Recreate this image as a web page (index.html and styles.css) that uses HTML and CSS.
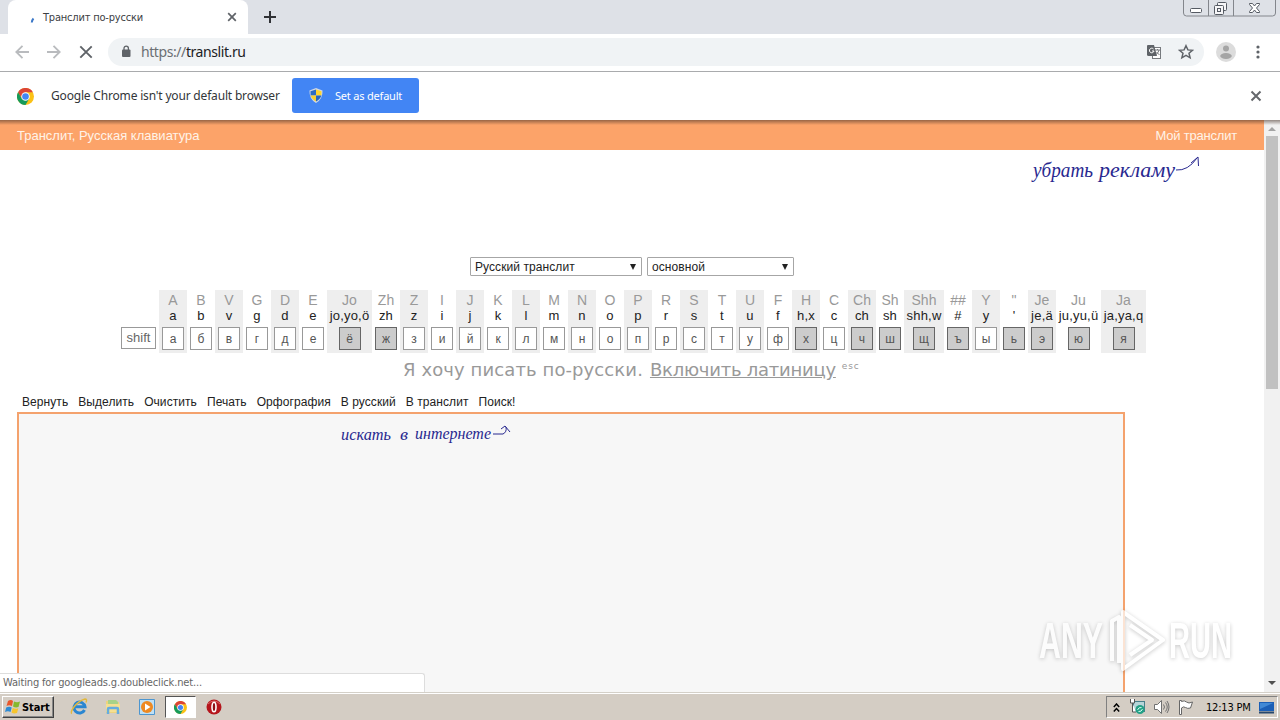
FILE: index.html
```html
<!DOCTYPE html>
<html lang="ru">
  <head>
    <meta charset="UTF-8" />
    <title>Транслит по-русски</title>
    <link rel="stylesheet" href="styles.css">
  </head>
  <body>
    <div class="tabstrip">
      <div class="tab">
        <svg class="spinner" width="16" height="16" viewBox="0 0 16 16"><path d="M8.500 6.500Q7 8 6.800 10.500" stroke="#3c78c8" stroke-width="2" fill="none"/></svg>
        <span class="tab-title">Транслит по-русски</span>
        <svg class="tab-close" width="10" height="10" viewBox="0 0 10 10"><path d="M1.200 1.200l7.600 7.600M8.800 1.200L1.200 8.800" stroke="#5f6368" stroke-width="1.700"/></svg>
      </div>
      <svg class="new-tab" width="12" height="12" viewBox="0 0 12 12"><path d="M6 0v12M0 6h12" stroke="#303236" stroke-width="2"/></svg>
      <div class="window-buttons">
        <svg width="94" height="17" viewBox="0 0 94 17" fill="none">
          <path d="M.5 0v13q0 3 3 3h86q3 0 3-3V0M25.500 0v16M50.500 0v16" stroke="#83868c"/>
          <rect x="7.500" y="8.500" width="11" height="4" rx="1" fill="#fff" stroke="#555a63"/>
          <g fill="#f6f6f8" stroke="#555a63"><rect x="34.500" y="2.500" width="9" height="8" rx="1"/><rect x="31.500" y="5.500" width="9" height="9" rx="1"/><rect x="34.500" y="8.500" width="3" height="3"/></g>
          <path d="M66.500 3.500h3l2 2.500 2-2.500h3v1l-3 3.500 3 3.500v1h-3l-2-2.500-2 2.500h-3v-1l3-3.500-3-3.500z" fill="#fff" stroke="#555a63"/>
        </svg>
      </div>
    </div>

    <div class="toolbar">
      <svg width="14" height="14" viewBox="0 0 14 14" fill="none" stroke="#b9bbbe" stroke-width="1.800"><path d="M14 7H1.500M7.500 .8L1.300 7l6.200 6.200"/></svg>
      <svg width="14" height="14" viewBox="0 0 14 14" fill="none" stroke="#b9bbbe" stroke-width="1.800"><path d="M0 7h12.500M6.500 .8L12.700 7l-6.200 6.200"/></svg>
      <svg width="14" height="14" viewBox="0 0 14 14" stroke="#5f6368" stroke-width="1.900"><path d="M1.300 1.300l11.400 11.400M12.700 1.300L1.300 12.700"/></svg>
      <div class="omnibox">
        <svg class="lock" width="10" height="13" viewBox="0 0 10 13"><rect x="1" y="4.500" width="8.500" height="7.500" rx="1" fill="#5f6368"/><path d="M3 5V3.300a2.200 2.200 0 0 1 4.400 0V5" fill="none" stroke="#5f6368" stroke-width="1.300"/></svg>
        <span class="url"><span class="scheme">https://</span>translit.ru</span>
        <svg class="translate" width="16" height="16" viewBox="0 0 16 16"><rect x="6.500" y="3.500" width="8" height="11" fill="#fff" stroke="#777a7e"/><path d="M1.500 1h6.500l3 11H2.500q-1.500 0-1.500-1.500V1.500z" fill="#5f6368"/><path d="M7.500 5A2.300 2.300 0 1 0 8 7H6" fill="none" stroke="#fff"/><path d="M9 6h5M11.500 5v1M13 6q-.5 3-3 4.500M10.500 8l3 3" fill="none" stroke="#777a7e"/></svg>
        <svg width="16" height="16" viewBox="0 0 16 16"><path d="M8 1.700l1.900 4.200 4.600.4-3.500 3 1.100 4.500L8 11.400l-4.100 2.400L5 9.300l-3.500-3 4.600-.4z" fill="none" stroke="#5f6368" stroke-width="1.500"/></svg>
      </div>
      <svg class="avatar" width="20" height="20" viewBox="0 0 20 20"><circle cx="10" cy="10" r="10" fill="#dcdcdc"/><circle cx="10" cy="6.500" r="3" fill="#a5a5a5"/><ellipse cx="10" cy="14" rx="5.800" ry="2.900" fill="#a5a5a5"/></svg>
      <svg class="menu" width="4" height="14" viewBox="0 0 4 14" fill="#5f6368"><circle cx="2" cy="2" r="1.600"/><circle cx="2" cy="7" r="1.600"/><circle cx="2" cy="12" r="1.600"/></svg>
    </div>

    <div class="infobar">
      <svg class="chrome-logo" width="17" height="17" viewBox="0 0 20 20"><circle cx="10" cy="10" r="10" fill="#fbc116"/><path d="M1.300 5A10 10 0 0 1 18.700 5H10L5.700 12.500z" fill="#dc4437"/><path d="M1.300 5A10 10 0 0 0 10 20l4.300-7.500H5.700z" fill="#169b5b"/><circle cx="10" cy="10" r="5" fill="#fff"/><circle cx="10" cy="10" r="3.900" fill="#4285f4"/></svg>
      <span class="infobar-text">Google Chrome isn't your default browser</span>
      <button class="set-default">
        <svg width="14" height="15" viewBox="0 0 14 15"><path d="M7 0l6.500 2.500Q14 11 7 15 0 11 .5 2.500z" fill="#cfd8e6"/><path d="M7 1.500v6H1.600L1.500 3.300z" fill="#2d6cc4"/><path d="M7 1.500l5.500 1.800-.1 4.200H7z" fill="#ffd52e"/><path d="M1.700 7.500H7v6Q2.500 11 1.700 7.500z" fill="#f8d030"/><path d="M12.300 7.500H7v6q4.500-2.500 5.300-6z" fill="#2866bd"/></svg>
        <span>Set as default</span>
      </button>
      <svg class="infobar-close" width="12" height="12" viewBox="0 0 12 12"><path d="M1.500 1.500l9 9M10.500 1.500l-9 9" stroke="#65686c" stroke-width="2"/></svg>
    </div>

    <div class="viewport">
      <div class="page">
        <div class="site-header">
          <span>Транслит, Русская клавиатура</span>
          <span class="my">Мой транслит</span>
        </div>

        <svg class="note note-ads" width="180" height="40" viewBox="0 0 180 40">
          <g class="ink"><text x="8" y="27" font-size="20" textLength="60" lengthAdjust="spacingAndGlyphs">убрать</text><text x="74" y="27" font-size="20" textLength="76" lengthAdjust="spacingAndGlyphs">рекламу</text></g>
          <path d="M151 20q12 1 21-12M166 13l7-6 .5 9" fill="none" stroke="#28288f"/>
        </svg>

        <div class="layouts">
          <div class="select select-lang"><span>Русский транслит</span><i></i></div>
          <div class="select select-kind"><span>основной</span><i></i></div>
        </div>

        <div class="keyboard">
          <div class="shift">shift</div>
          <div class="col"><u>A</u><b>a</b><kbd>а</kbd></div>
          <div class="col"><u>B</u><b>b</b><kbd>б</kbd></div>
          <div class="col"><u>V</u><b>v</b><kbd>в</kbd></div>
          <div class="col"><u>G</u><b>g</b><kbd>г</kbd></div>
          <div class="col"><u>D</u><b>d</b><kbd>д</kbd></div>
          <div class="col"><u>E</u><b>e</b><kbd>е</kbd></div>
          <div class="col wide"><u>Jo</u><b>jo,yo,ö</b><kbd class="dark">ё</kbd></div>
          <div class="col"><u>Zh</u><b>zh</b><kbd class="dark">ж</kbd></div>
          <div class="col"><u>Z</u><b>z</b><kbd>з</kbd></div>
          <div class="col"><u>I</u><b>i</b><kbd>и</kbd></div>
          <div class="col"><u>J</u><b>j</b><kbd>й</kbd></div>
          <div class="col"><u>K</u><b>k</b><kbd>к</kbd></div>
          <div class="col"><u>L</u><b>l</b><kbd>л</kbd></div>
          <div class="col"><u>M</u><b>m</b><kbd>м</kbd></div>
          <div class="col"><u>N</u><b>n</b><kbd>н</kbd></div>
          <div class="col"><u>O</u><b>o</b><kbd>о</kbd></div>
          <div class="col"><u>P</u><b>p</b><kbd>п</kbd></div>
          <div class="col"><u>R</u><b>r</b><kbd>р</kbd></div>
          <div class="col"><u>S</u><b>s</b><kbd>с</kbd></div>
          <div class="col"><u>T</u><b>t</b><kbd>т</kbd></div>
          <div class="col"><u>U</u><b>u</b><kbd>у</kbd></div>
          <div class="col"><u>F</u><b>f</b><kbd>ф</kbd></div>
          <div class="col"><u>H</u><b>h,x</b><kbd class="dark">х</kbd></div>
          <div class="col"><u>C</u><b>c</b><kbd>ц</kbd></div>
          <div class="col"><u>Ch</u><b>ch</b><kbd class="dark">ч</kbd></div>
          <div class="col"><u>Sh</u><b>sh</b><kbd class="dark">ш</kbd></div>
          <div class="col medium"><u>Shh</u><b>shh,w</b><kbd class="dark">щ</kbd></div>
          <div class="col"><u>##</u><b>#</b><kbd class="dark">ъ</kbd></div>
          <div class="col"><u>Y</u><b>y</b><kbd>ы</kbd></div>
          <div class="col"><u>"</u><b>'</b><kbd class="dark">ь</kbd></div>
          <div class="col"><u>Je</u><b>je,ä</b><kbd class="dark">э</kbd></div>
          <div class="col wide"><u>Ju</u><b>ju,yu,ü</b><kbd class="dark">ю</kbd></div>
          <div class="col wide"><u>Ja</u><b>ja,ya,q</b><kbd class="dark">я</kbd></div>
        </div>

        <div class="switch"><span>Я хочу писать по-русски.</span><a>Включить латиницу</a><small>esc</small></div>

        <div class="actions">
          <a>Вернуть</a>
          <a>Выделить</a>
          <a>Очистить</a>
          <a>Печать</a>
          <a>Орфография</a>
          <a>В русский</a>
          <a>В транслит</a>
          <a>Поиск!</a>
        </div>

        <div class="editor">
          <svg class="note note-search" width="185" height="28" viewBox="0 0 185 28">
            <g class="ink"><text x="6" y="20" font-size="16" textLength="50" lengthAdjust="spacingAndGlyphs">искать</text><text x="65" y="20" font-size="16" textLength="8" lengthAdjust="spacingAndGlyphs">в</text><text x="80" y="19" font-size="16" textLength="76" lengthAdjust="spacingAndGlyphs">интернете</text></g>
            <path d="M158 14h10q4-2 3-7M166 9l4-3 5 6" fill="none" stroke="#28288f"/>
          </svg>
        </div>
      </div>

      <div class="scrollbar">
        <svg width="16" height="16" viewBox="0 0 16 16"><path d="M4 11l4-4 4 4z" fill="#a3a3a3"/></svg>
        <div class="thumb"></div>
        <svg width="16" height="16" viewBox="0 0 16 16"><path d="M4 5h8l-4 4z" fill="#505050"/></svg>
      </div>

      <div class="status">Waiting for googleads.g.doubleclick.net...</div>

      <svg class="watermark" width="244" height="70" viewBox="0 0 244 70">
        <g class="mark-text"><text x="5" y="51" textLength="64" lengthAdjust="spacingAndGlyphs">ANY</text><text x="135" y="51" textLength="63" lengthAdjust="spacingAndGlyphs">RUN</text></g>
        <g fill="none" stroke="#fff" stroke-width="4" stroke-linejoin="round"><path d="M78 54V14l7-4v46M89 5l40 28-40 29V5z"/><path d="M96 18l22 15-22 15"/></g>
      </svg>
    </div>

    <div class="taskbar">
      <div class="start">
        <svg width="16" height="16" viewBox="0 0 16 16"><path d="M3 2q3-2 5 0L7 7Q4 5.500 1.500 7z" fill="#e9572b"/><path d="M9 2.500q3 1.500 6 0L13.500 8q-3 1-5.500-.5z" fill="#86b82e"/><path d="M1.200 8.500q3-1.500 5.500 0L5.500 13Q3 11.500 0 13z" fill="#2d8bd4"/><path d="M7.800 9q2.500 1.500 5.500.2L12 14q-3 1.200-5.500-.5z" fill="#f7c52c"/></svg>
        <span>Start</span>
      </div>
      <div class="launch">
        <svg width="18" height="18" viewBox="0 0 18 18" fill="none"><path d="M14.500 12A5.500 5.500 0 1 1 15 8.800H5" stroke="#2a86d1" stroke-width="3"/><path d="M2 15.500Q0 15 3.500 9.500 9 2.500 15 1q2.500 0 1 3.500" stroke="#e2b83c" stroke-width="1.400"/></svg>
      </div>
      <div class="launch">
        <svg width="18" height="18" viewBox="0 0 18 18"><path d="M2 3h5l1 1h7v11H2z" fill="#edd37d"/><path d="M4 2h8l2 2v3H4z" fill="#a8d288"/><path d="M2 6h14v8H2z" fill="#f5df91"/><path d="M4 16v-5q0-1 1-1h8q1 0 1 1v5" fill="none" stroke="#65ace0" stroke-width="2.500"/></svg>
      </div>
      <div class="launch">
        <svg width="18" height="18" viewBox="0 0 18 18"><path d="M1.500 1.500h15v15h-15z" fill="#bfe0f5" stroke="#4d96d0"/><circle cx="9" cy="9" r="6" fill="#ee8922"/><path d="M7 5.500v7l5.500-3.500z" fill="#fff"/></svg>
      </div>
      <div class="launch active">
        <svg width="13" height="13" viewBox="0 0 20 20"><circle cx="10" cy="10" r="10" fill="#fbc116"/><path d="M1.300 5A10 10 0 0 1 18.700 5H10L5.700 12.500z" fill="#dc4437"/><path d="M1.300 5A10 10 0 0 0 10 20l4.300-7.500H5.700z" fill="#169b5b"/><circle cx="10" cy="10" r="5" fill="#fff"/><circle cx="10" cy="10" r="3.900" fill="#4285f4"/></svg>
      </div>
      <div class="launch">
        <svg width="16" height="16" viewBox="0 0 16 16"><circle cx="8" cy="8" r="7.500" fill="#b5151c"/><path d="M2 5q6-6 12 0" fill="none" stroke="#da6666"/><ellipse cx="8" cy="8" rx="2" ry="4.800" fill="#8f1016" stroke="#fff" stroke-width="1.600"/></svg>
      </div>
      <div class="tray">
        <svg class="chevrons" width="7" height="9" viewBox="0 0 7 9" fill="none" stroke="#000" stroke-width="1.500"><path d="M.8 4l2.700-3 2.700 3M.8 8.500l2.700-3 2.700 3"/></svg>
        <svg class="network" width="17" height="16" viewBox="0 0 17 16"><rect x="4.500" y="2.500" width="11" height="10" fill="#b6d5d9" stroke="#477f8b"/><path d="M1.500 0v4h4V0M3.500 4v9H7" fill="#fff" stroke="#555"/><circle cx="11" cy="10.500" r="4.500" fill="#24a086"/><path d="M8.500 11q1-3 4-2.500M13.500 10q-1 3-4 2.500" fill="none" stroke="#d9fff4"/></svg>
        <svg class="sound" width="17" height="16" viewBox="0 0 17 16" fill="none" stroke="#707070"><path d="M1.500 5.500h3l4-4v13l-4-4h-3z" fill="#fff"/><path d="M10.500 5.500q2 2.500 0 5M12.500 3.500q3.500 4.500 0 9M14 2q4 6 0 12"/></svg>
        <svg class="flag" width="17" height="16" viewBox="0 0 17 16"><path d="M2.500 15.500v-14h2v1q3-1.500 5 .5t6 0l-2 6q-3 1-5-.5t-4 .5v6.500z" fill="#fff" stroke="#666"/></svg>
        <span class="clock">12:13 PM</span>
        <svg width="15" height="13" viewBox="0 0 15 13"><path d="M0 1h15v9H0z" fill="#1b5fb6"/><path d="M1 2h13L1 8z" fill="#4189d5"/><path d="M0 10.500h15v2H0z" fill="#26476d"/></svg>
      </div>
    </div>
  </body>
</html>
```

FILE: styles.css
```css
* {
  box-sizing: border-box;
}

body {
  margin: 0;
  width: 1280px;
  height: 720px;
  overflow: hidden;
  background: #fff;
  font-family: "Liberation Sans", sans-serif;
  white-space: nowrap;
}

svg {
  display: block;
  flex: none;
}

/* browser window */
.tabstrip {
  display: flex;
  height: 34px;
  padding-left: 8px;
  background: #dee1e7;
}

.tab {
  display: flex;
  align-items: center;
  width: 240px;
  padding: 0 11px 0 17px;
  border-radius: 8px 8px 0 0;
  background: #fff;
}

.spinner {
  margin-top: 5px;
}

.tab-title {
  margin-left: 2px;
  color: #3c4043;
  font: 11px "DejaVu Sans Condensed", "DejaVu Sans", sans-serif;
  letter-spacing: -0.2px;
}

.tab-close {
  margin-left: auto;
}

.new-tab {
  margin: 11px 0 0 16px;
}

.window-buttons {
  margin-left: auto;
  margin-right: 3px;
}

.toolbar {
  display: flex;
  align-items: center;
  gap: 18px;
  height: 38px;
  padding: 0 20px 2px 15px;
  border-bottom: 1px solid #a9abad;
}

.omnibox {
  display: flex;
  flex: none;
  align-items: center;
  width: 1096px;
  height: 28px;
  margin: 0 -6px 0 -3px;
  padding: 0 10px 0 13px;
  border-radius: 14px;
  background: #f0f3f5;
}

.lock {
  margin-right: 10px;
}

.url {
  color: #202124;
  font: 14px "Noto Sans", sans-serif;
  letter-spacing: -0.42px;
}

.scheme {
  color: #6b6f73;
}

.translate {
  margin: 0 16px 0 auto;
}

.menu {
  margin-left: auto;
}

.infobar {
  display: flex;
  align-items: center;
  height: 48px;
  padding: 0 18px 0 17px;
}

.infobar-text {
  width: 228px;
  margin: -2px 13px 0 17px;
  color: #333639;
  font: 12px "Noto Sans", sans-serif;
  letter-spacing: -0.18px;
}

.set-default {
  display: flex;
  align-items: center;
  gap: 12px;
  width: 127px;
  height: 35px;
  margin-top: -1px;
  padding: 0 17px;
  border: 0;
  border-radius: 3px;
  background: #4285f4;
  color: #fff;
  font: 11px "Noto Sans", sans-serif;
  white-space: nowrap;
  letter-spacing: -0.2px;
}

.infobar-close {
  margin-left: auto;
}

.viewport {
  position: relative;
  display: flex;
  height: 572px;
  overflow: hidden;
}

.viewport::before {
  content: "";
  position: absolute;
  top: 0;
  left: 0;
  width: 100%;
  height: 5px;
  background: linear-gradient(rgba(70, 50, 40, 0.55), transparent);
}

.scrollbar {
  display: flex;
  flex-direction: column;
  width: 16px;
  background: #f1f1f1;
}

.thumb {
  width: 12px;
  height: 253px;
  margin: 0 2px auto;
  background: #c1c1c1;
}

/* page */
.page {
  width: 1264px;
}

.site-header {
  display: flex;
  align-items: center;
  justify-content: space-between;
  height: 30px;
  padding: 1px 27px 0 17px;
  background: #fca369;
  color: #fff3e8;
  font-size: 13px;
}

.my {
  letter-spacing: -0.2px;
}

.note {
  position: absolute;
}

.note-ads {
  top: 30px;
  left: 1025px;
}

.note-search {
  top: 6px;
  left: 316px;
}

.ink {
  fill: #28288f;
  font-family: "Liberation Serif", serif;
  font-style: italic;
}

.layouts {
  display: flex;
  gap: 5px;
  margin: 107px 0 0 470px;
}

.select {
  display: flex;
  align-items: center;
  justify-content: space-between;
  height: 19px;
  padding: 0 5px 0 4px;
  border: 1px solid #a6a6a6;
  border-radius: 1px;
  color: #222;
  font-size: 12px;
  letter-spacing: 0.08px;
}

.select-lang {
  width: 172px;
}

.select-kind {
  width: 147px;
}

.select i {
  border: 3px solid transparent;
  border-top: 6px solid #222;
  border-bottom: 0;
}

.keyboard {
  display: flex;
  height: 63px;
  margin: 14px 0 0 121px;
}

.shift {
  width: 35px;
  height: 22px;
  margin: 37px 3px 0 0;
  border: 1px solid #999;
  color: #666;
  font-size: 13px;
  line-height: 20px;
  text-align: center;
}

.col {
  width: 28px;
  text-align: center;
  font-size: 13px;
}

.col:nth-child(even) {
  background: #eee;
}

.wide {
  width: 45px;
}

.medium {
  width: 40px;
}

.col u {
  display: block;
  height: 18px;
  color: #999;
  font-size: 14px;
  line-height: 21px;
  text-decoration: none;
}

.col b {
  display: block;
  height: 19px;
  color: #222;
  font-weight: normal;
  line-height: 16px;
  letter-spacing: 0.2px;
}

.col kbd {
  display: block;
  width: 22px;
  height: 23px;
  margin: 0 auto;
  border: 1px solid #999;
  background: #fff;
  color: #555;
  font: 12px/22px "Liberation Sans", sans-serif;
}

.col .dark {
  border-color: #666;
  background: #ccc;
}

.switch {
  display: flex;
  height: 36px;
  margin-left: 403px;
  color: #999;
  font: 18px/33px "DejaVu Sans", sans-serif;
  letter-spacing: 0.1px;
}

.switch a {
  margin: 0 6px 0 7px;
  text-decoration: underline;
  letter-spacing: -0.25px;
}

.switch small {
  font-size: 9px;
  line-height: 26px;
  letter-spacing: 0.8px;
}

.actions {
  display: flex;
  gap: 10px;
  height: 23px;
  padding-left: 22px;
  color: #222;
  font-size: 12px;
  line-height: 26px;
  letter-spacing: 0.07px;
}

.editor {
  position: relative;
  width: 1108px;
  height: 300px;
  margin-left: 17px;
  border: 2px solid #f4a26d;
  background: #f7f7f7;
}

.status {
  position: absolute;
  bottom: 0;
  left: 0;
  width: 425px;
  height: 19px;
  padding-left: 3px;
  border: 1px solid #ddd;
  border-width: 1px 1px 0 0;
  border-radius: 0 3px 0 0;
  background: #fff;
  color: #666;
  font: 11px/18px "DejaVu Sans Condensed", "DejaVu Sans", sans-serif;
  letter-spacing: -0.15px;
}

.watermark {
  position: absolute;
  top: 487px;
  left: 1034px;
  opacity: 0.7;
  filter: drop-shadow(0 1px 2px rgba(0, 0, 0, 0.3));
}

.mark-text {
  fill: #fff;
  font: bold 50px "Liberation Sans", sans-serif;
}

/* taskbar */
.taskbar {
  display: flex;
  align-items: center;
  height: 28px;
  padding: 1px 2px 0;
  border-top: 1px solid #d4d0c8;
  background: #d4cdc4;
  box-shadow: inset 0 1px #fff;
}

.start {
  display: flex;
  align-items: center;
  gap: 1px;
  width: 52px;
  height: 22px;
  margin-right: 8px;
  padding-left: 2px;
  border: 1px solid;
  border-color: #fff #404040 #404040 #fff;
  box-shadow: inset -1px -1px #888;
  color: #000;
  font: bold 11px "DejaVu Sans Condensed", "DejaVu Sans", sans-serif;
  letter-spacing: -0.1px;
}

.launch {
  display: flex;
  align-items: center;
  justify-content: center;
  width: 34px;
  height: 22px;
}

.active {
  width: 31px;
  margin: 0 1px;
  border: 1px solid;
  border-color: #555 #fff #fff #555;
  background: #fff;
}

.tray {
  display: flex;
  align-items: center;
  width: 172px;
  height: 22px;
  margin-left: auto;
  padding-left: 6px;
  border: 1px solid;
  border-color: #808080 #fff #fff #808080;
}

.network {
  margin-left: 9px;
}

.sound {
  margin-left: 7px;
}

.flag {
  margin-left: 7px;
}

.clock {
  width: 46px;
  margin: 0 7px 0 12px;
  color: #000;
  font: 11px "DejaVu Sans Condensed", "DejaVu Sans", sans-serif;
  letter-spacing: -0.2px;
}
```
